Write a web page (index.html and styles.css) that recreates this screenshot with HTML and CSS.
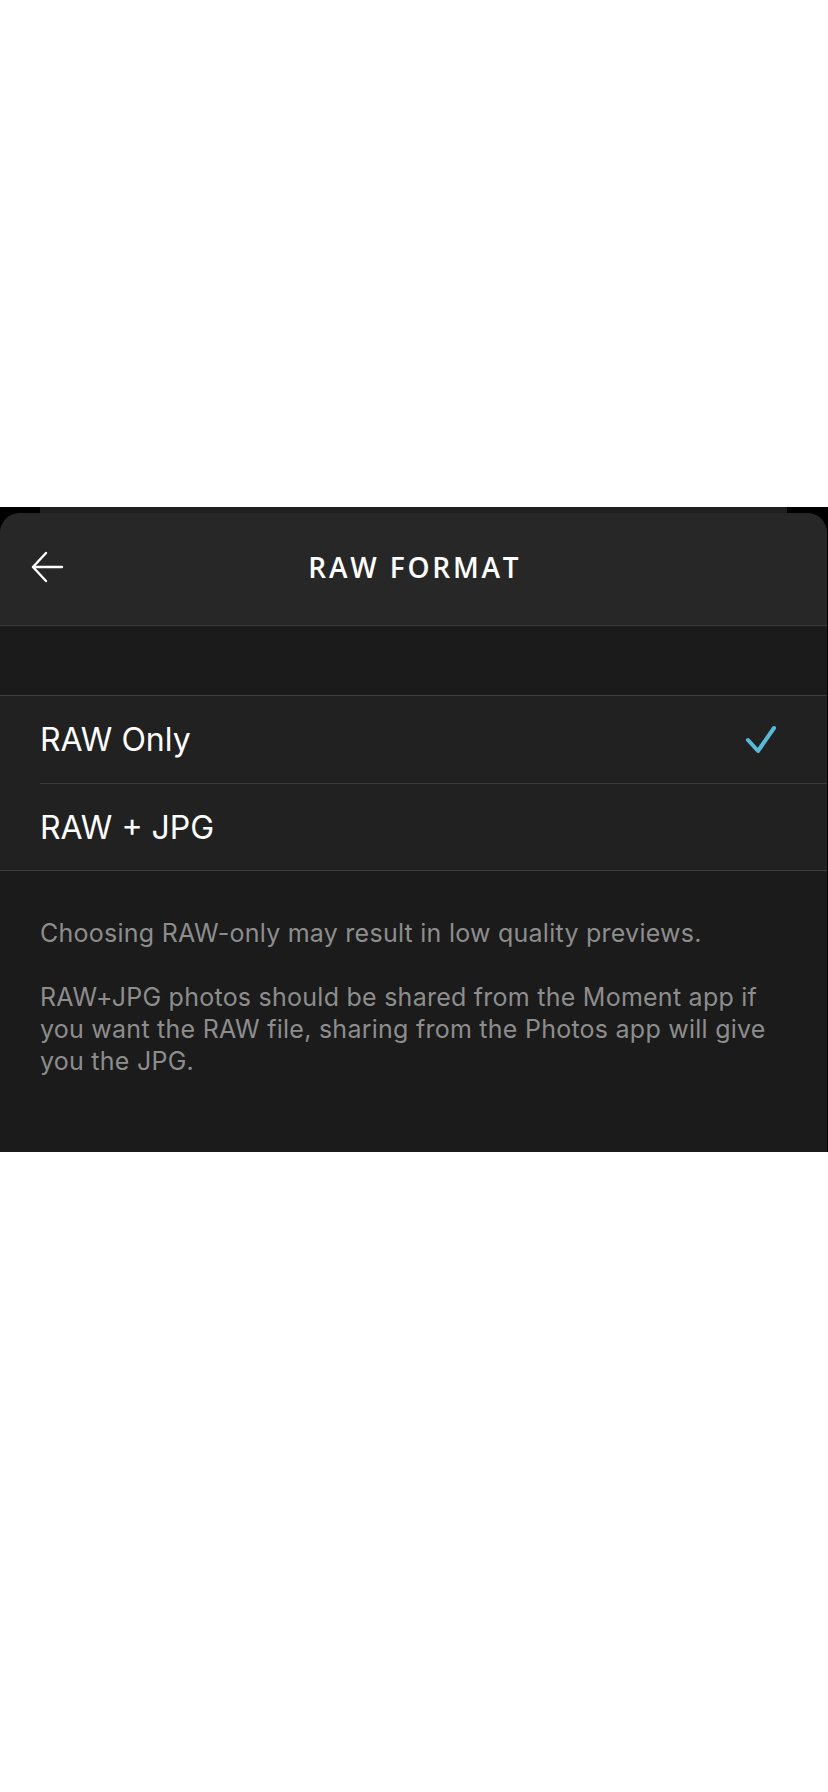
FILE: index.html
```html
<!DOCTYPE html>
<html lang="en">
<head>
<meta charset="utf-8">
<title>RAW Format</title>
<link rel="stylesheet" href="styles.css">
</head>
<body>
<div class="top-space"></div>
<div class="sheet">
  <div class="sheet-behind"></div>
  <div class="panel">
    <header class="header">
      <div class="header-left">
        <svg class="back" width="34" height="32" viewBox="0 0 34 32" fill="none" stroke="#fff" stroke-width="2.4" stroke-linecap="round" stroke-linejoin="round">
          <path d="M3 16 H32"/>
          <path d="M16 2 L3 16 L16 30"/>
        </svg>
      </div>
      <h1 class="title">RAW FORMAT</h1>
      <div class="header-right"></div>
    </header>
    <div class="gap"></div>
    <ul class="options">
      <li class="option">
        <span class="option-label">RAW Only</span>
        <svg class="check" width="32" height="32" viewBox="0 0 32 32" fill="none" stroke="#58b9d8" stroke-width="4" stroke-linecap="round" stroke-linejoin="round">
          <path d="M3 16 L13 27 L29 4"/>
        </svg>
      </li>
      <li class="option">
        <span class="option-label">RAW + JPG</span>
      </li>
    </ul>
    <div class="footer">
      <p>Choosing RAW-only may result in low quality previews.</p>
      <p>RAW+JPG photos should be shared from the Moment app if you want the RAW file, sharing from the Photos app will give you the JPG.</p>
    </div>
  </div>
</div>
</body>
</html>
```

FILE: styles.css
```css
* { box-sizing: border-box; }

body {
  margin: 0;
  background: #ffffff;
  font-family: Inter, "Liberation Sans", sans-serif;
}

.top-space {
  height: 507px;
}

.sheet {
  background: #000000;
  padding-right: 1px;
}

.sheet-behind {
  height: 6px;
  margin: 0 40px;
  background: #1f1f1f;
}

.panel {
  border-radius: 20px 20px 0 0;
  overflow: hidden;
  background: #1b1b1b;
}

.header {
  height: 113px;
  background: #272727;
  border-bottom: 1px solid #3a3a3a;
  display: grid;
  grid-template-columns: 1fr auto 1fr;
  align-items: center;
}

.header-left {
  padding-left: 30px;
  display: flex;
  align-items: center;
}

.back {
  display: block;
  margin-top: -5px;
}

.title {
  margin: -5px 0 0;
  color: #ffffff;
  font-family: "Open Sans", sans-serif;
  font-weight: 600;
  font-size: 28px;
  letter-spacing: 2.8px;
  padding-left: 2.8px;
}

.gap {
  height: 70px;
  background: #1b1b1b;
  border-bottom: 1px solid #3d3d3d;
}

.options {
  list-style: none;
  margin: 0;
  padding: 0 0 0 40px;
  background: #212121;
  border-bottom: 1px solid #3d3d3d;
}

.option {
  height: 87px;
  display: flex;
  align-items: center;
  justify-content: space-between;
  padding-right: 50px;
}

.option + .option {
  border-top: 1px solid #3a3a3a;
  height: 87px;
}

.option-label {
  color: #ffffff;
  font-size: 32px;
  font-weight: 400;
}

.check {
  display: block;
  margin-top: 1px;
}

.footer {
  background: #1b1b1b;
  padding: 46px 40px 75px;
  color: #8d8d8d;
  font-size: 25px;
  letter-spacing: 0.25px;
  line-height: 32px;
}

.footer p {
  margin: 0 0 32px;
}

.footer p:last-child {
  margin-bottom: 0;
}
```
